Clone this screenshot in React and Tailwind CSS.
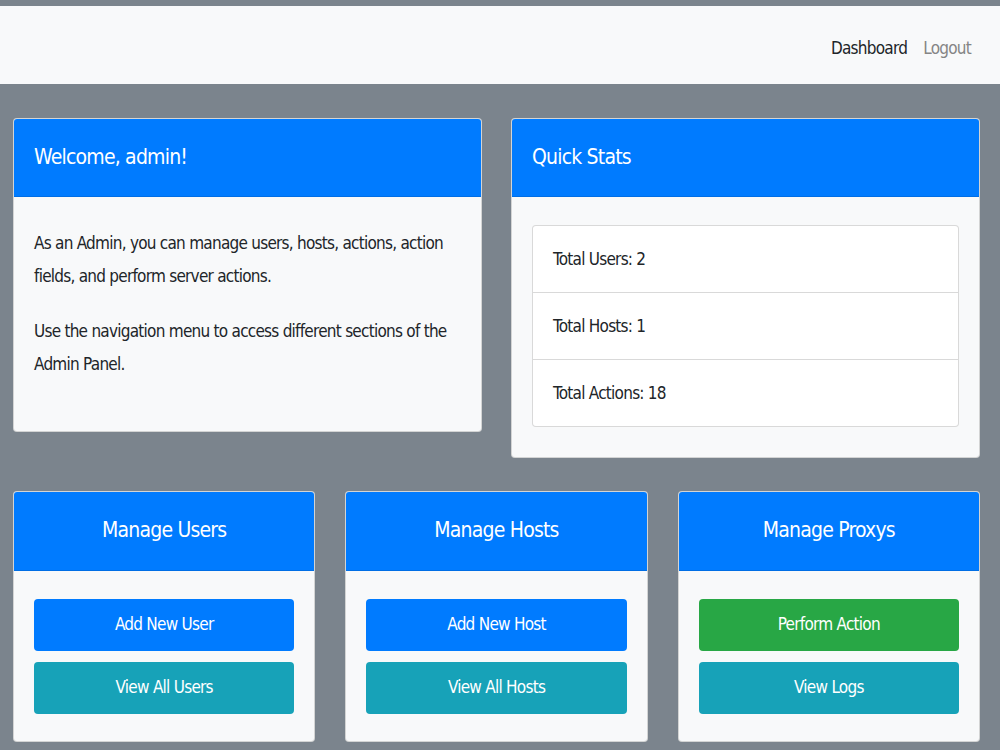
const FONT = { fontFamily: '"DejaVu Sans Condensed", "Liberation Sans", sans-serif' }

const CardHeader = ({ title, center }) => (
  <div
    className={`flex items-center border-b border-black/10 bg-[#007bff] px-[20px] text-[21px] tracking-[-0.8px] text-white ${
      center ? 'h-[79px] justify-center' : 'h-[78px]'
    }`}
  >
    {title}
  </div>
)

const ActionCard = ({ title, buttons }) => (
  <div className="overflow-hidden rounded-[4px] border border-black/15 bg-[#f8f9fa]">
    <CardHeader title={title} center />
    <div className="flex flex-col gap-[11px] px-[20px] pb-[27px] pt-[28px]">
      {buttons.map((b) => (
        <button
          key={b.label}
          className={`flex h-[52px] items-center justify-center rounded-[4px] text-[17px] tracking-[-0.75px] text-white ${b.color}`}
        >
          {b.label}
        </button>
      ))}
    </div>
  </div>
)

export default function App() {
  return (
    <div className="min-h-screen bg-[#7b848d] pt-[6px] text-[#212529]" style={FONT}>
      <nav className="flex h-[78px] items-center justify-end gap-[16px] bg-[#f8f9fa] pr-[29px] pt-[7px] text-[17px] tracking-[-0.75px]">
        <a className="text-[#212529]">Dashboard</a>
        <a className="text-[#858585]">Logout</a>
      </nav>

      <main className="pl-[13px] pr-[20px] pt-[34px]">
        <div className="grid grid-cols-2 items-start gap-[29px]">
          <div className="overflow-hidden rounded-[4px] border border-black/15 bg-[#f8f9fa]">
            <CardHeader title="Welcome, admin!" />
            <div className="px-[20px] pb-[28px] pt-[30px] text-[17px] leading-[33px] tracking-[-0.75px]">
              <p className="mb-[22px]">
                As an Admin, you can manage users, hosts, actions, action fields, and perform server actions.
              </p>
              <p className="mb-[22px]">Use the navigation menu to access different sections of the Admin Panel.</p>
            </div>
          </div>

          <div className="overflow-hidden rounded-[4px] border border-black/15 bg-[#f8f9fa]">
            <CardHeader title="Quick Stats" />
            <div className="px-[20px] pb-[30px] pt-[28px]">
              <ul className="overflow-hidden rounded-[4px] border border-black/15 bg-white text-[17px] leading-[33px] tracking-[-0.75px]">
                <li className="border-b border-black/15 px-[20px] py-[16.5px]">Total Users: 2</li>
                <li className="border-b border-black/15 px-[20px] py-[16.5px]">Total Hosts: 1</li>
                <li className="px-[20px] py-[16.5px]">Total Actions: 18</li>
              </ul>
            </div>
          </div>
        </div>

        <div className="mt-[33px] grid grid-cols-3 gap-[30px]">
          <ActionCard
            title="Manage Users"
            buttons={[
              { label: 'Add New User', color: 'bg-[#007bff]' },
              { label: 'View All Users', color: 'bg-[#17a2b8]' },
            ]}
          />
          <ActionCard
            title="Manage Hosts"
            buttons={[
              { label: 'Add New Host', color: 'bg-[#007bff]' },
              { label: 'View All Hosts', color: 'bg-[#17a2b8]' },
            ]}
          />
          <ActionCard
            title="Manage Proxys"
            buttons={[
              { label: 'Perform Action', color: 'bg-[#28a745]' },
              { label: 'View Logs', color: 'bg-[#17a2b8]' },
            ]}
          />
        </div>
      </main>
    </div>
  )
}
